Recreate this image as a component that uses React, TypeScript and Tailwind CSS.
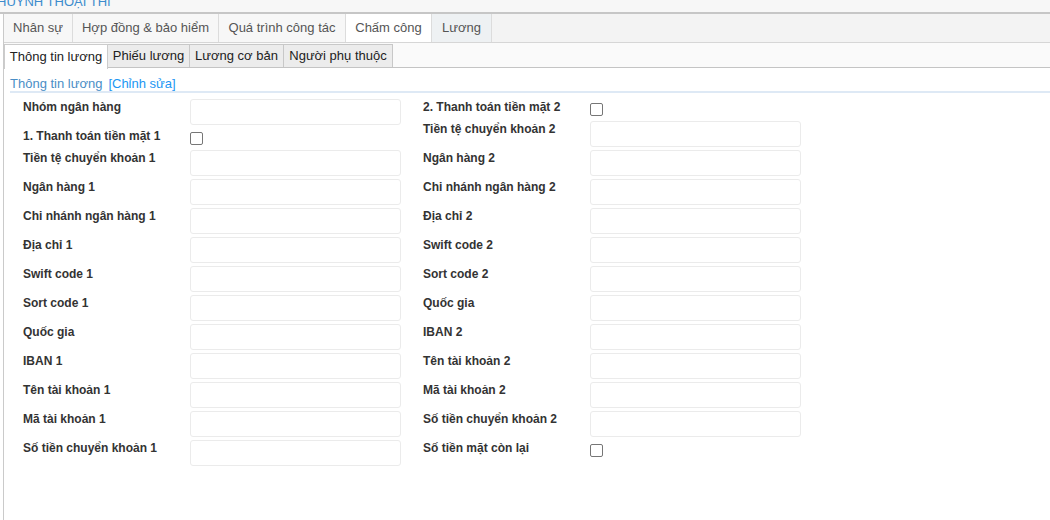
import React from "react";

type Row = { label: string; kind: "input" | "check" };

const left: Row[] = [
  { label: "Nhóm ngân hàng", kind: "input" },
  { label: "1. Thanh toán tiền mặt 1", kind: "check" },
  { label: "Tiền tệ chuyển khoản 1", kind: "input" },
  { label: "Ngân hàng 1", kind: "input" },
  { label: "Chi nhánh ngân hàng 1", kind: "input" },
  { label: "Địa chỉ 1", kind: "input" },
  { label: "Swift code 1", kind: "input" },
  { label: "Sort code 1", kind: "input" },
  { label: "Quốc gia", kind: "input" },
  { label: "IBAN 1", kind: "input" },
  { label: "Tên tài khoản 1", kind: "input" },
  { label: "Mã tài khoản 1", kind: "input" },
  { label: "Số tiền chuyển khoản 1", kind: "input" },
];

const right: Row[] = [
  { label: "2. Thanh toán tiền mặt 2", kind: "check" },
  { label: "Tiền tệ chuyển khoản 2", kind: "input" },
  { label: "Ngân hàng 2", kind: "input" },
  { label: "Chi nhánh ngân hàng 2", kind: "input" },
  { label: "Địa chỉ 2", kind: "input" },
  { label: "Swift code 2", kind: "input" },
  { label: "Sort code 2", kind: "input" },
  { label: "Quốc gia", kind: "input" },
  { label: "IBAN 2", kind: "input" },
  { label: "Tên tài khoản 2", kind: "input" },
  { label: "Mã tài khoản 2", kind: "input" },
  { label: "Số tiền chuyển khoản 2", kind: "input" },
  { label: "Số tiền mặt còn lại", kind: "check" },
];

function FormRow({ row }: { row: Row }) {
  if (row.kind === "check") {
    return (
      <div className="flex h-[19px] mb-[3px]">
        <div className="w-[167px] pt-[1px] text-[12px] leading-[14px] font-bold text-[#333]">{row.label}</div>
        <div className="pt-[4px]">
          <div className="w-[13px] h-[13px] border border-[#767676] rounded-[2px] bg-white"></div>
        </div>
      </div>
    );
  }
  return (
    <div className="flex h-[26px] mb-[3px]">
      <div className="w-[167px] pt-[1px] text-[12px] leading-[14px] font-bold text-[#333]">{row.label}</div>
      <div className="w-[211px] h-[26px] border border-[#ebebeb] rounded-[3px] bg-white"></div>
    </div>
  );
}

const mainTabs = [
  { t: "Nhân sự", w: "w-[69px]", bg: "bg-[#f7f7f7]" },
  { t: "Hợp đồng & bảo hiểm", w: "w-[146px]", bg: "bg-[#f7f7f7]" },
  { t: "Quá trình công tác", w: "w-[127px]", bg: "bg-[#f7f7f7]" },
  { t: "Chấm công", w: "w-[86px]", bg: "bg-white" },
  { t: "Lương", w: "w-[60px]", bg: "bg-[#eef1f3]" },
];

const subTabs = [
  { t: "Phiếu lương", w: "w-[82px]" },
  { t: "Lương cơ bản", w: "w-[94px]" },
  { t: "Người phụ thuộc", w: "w-[109px]" },
];

export default function App() {
  return (
    <div
      className="w-[1050px] h-[520px] bg-white overflow-hidden flex flex-col"
      style={{ fontFamily: '"Liberation Sans", Arial, sans-serif' }}
    >
      <div className="h-[12px] bg-[#f7f7f7] overflow-hidden shrink-0">
        <div className="text-[13px] leading-[13px] -mt-[5px] -ml-[3px] text-[#3d8ccd] whitespace-nowrap">HUỲNH THOẠI THI</div>
      </div>
      <div className="h-[2px] bg-[#c6c6c6] shrink-0"></div>
      <div className="flex-1 flex pl-[3px]">
        <div className="flex-1 border-l border-[#cacaca] flex flex-col">
          <div className="flex h-[29px] bg-[#f3f3f3] border-b border-[#d6d6d6]">
            {mainTabs.map((m) => (
              <div
                key={m.t}
                className={`${m.w} ${m.bg} h-full border-r border-[#dcdcdc] flex items-center justify-center text-[13px] text-[#555]`}
              >
                {m.t}
              </div>
            ))}
          </div>
          <div className="flex h-[25px] bg-[#fafafa] border-b border-[#c4c4c4] pt-[1px]">
            <div className="w-[104px] h-[25px] bg-white border-l border-r border-t border-[#cccccc] flex items-center justify-center text-[13px] text-[#222] relative z-10">
              Thông tin lương
            </div>
            {subTabs.map((s) => (
              <div
                key={s.t}
                className={`${s.w} h-[23px] bg-[#ececec] border-r border-t border-[#c8c8c8] flex items-center justify-center text-[13px] text-[#222]`}
              >
                {s.t}
              </div>
            ))}
          </div>
          <div className="pl-[6px]">
            <div className="mt-[9px] h-[16px] border-b-2 border-[#dee9f5] text-[13px] leading-[14px] flex">
              <span className="text-[#4a8ec6]">Thông tin lương</span>
              <span className="ml-[6px] text-[#2196f3]">[Chỉnh sửa]</span>
            </div>
            <div className="flex pl-[13px] pt-[6px] gap-[22px]">
              <div className="w-[378px]">
                {left.map((r) => (
                  <FormRow key={r.label} row={r} />
                ))}
              </div>
              <div className="w-[378px]">
                {right.map((r) => (
                  <FormRow key={r.label} row={r} />
                ))}
              </div>
            </div>
          </div>
        </div>
      </div>
    </div>
  );
}
